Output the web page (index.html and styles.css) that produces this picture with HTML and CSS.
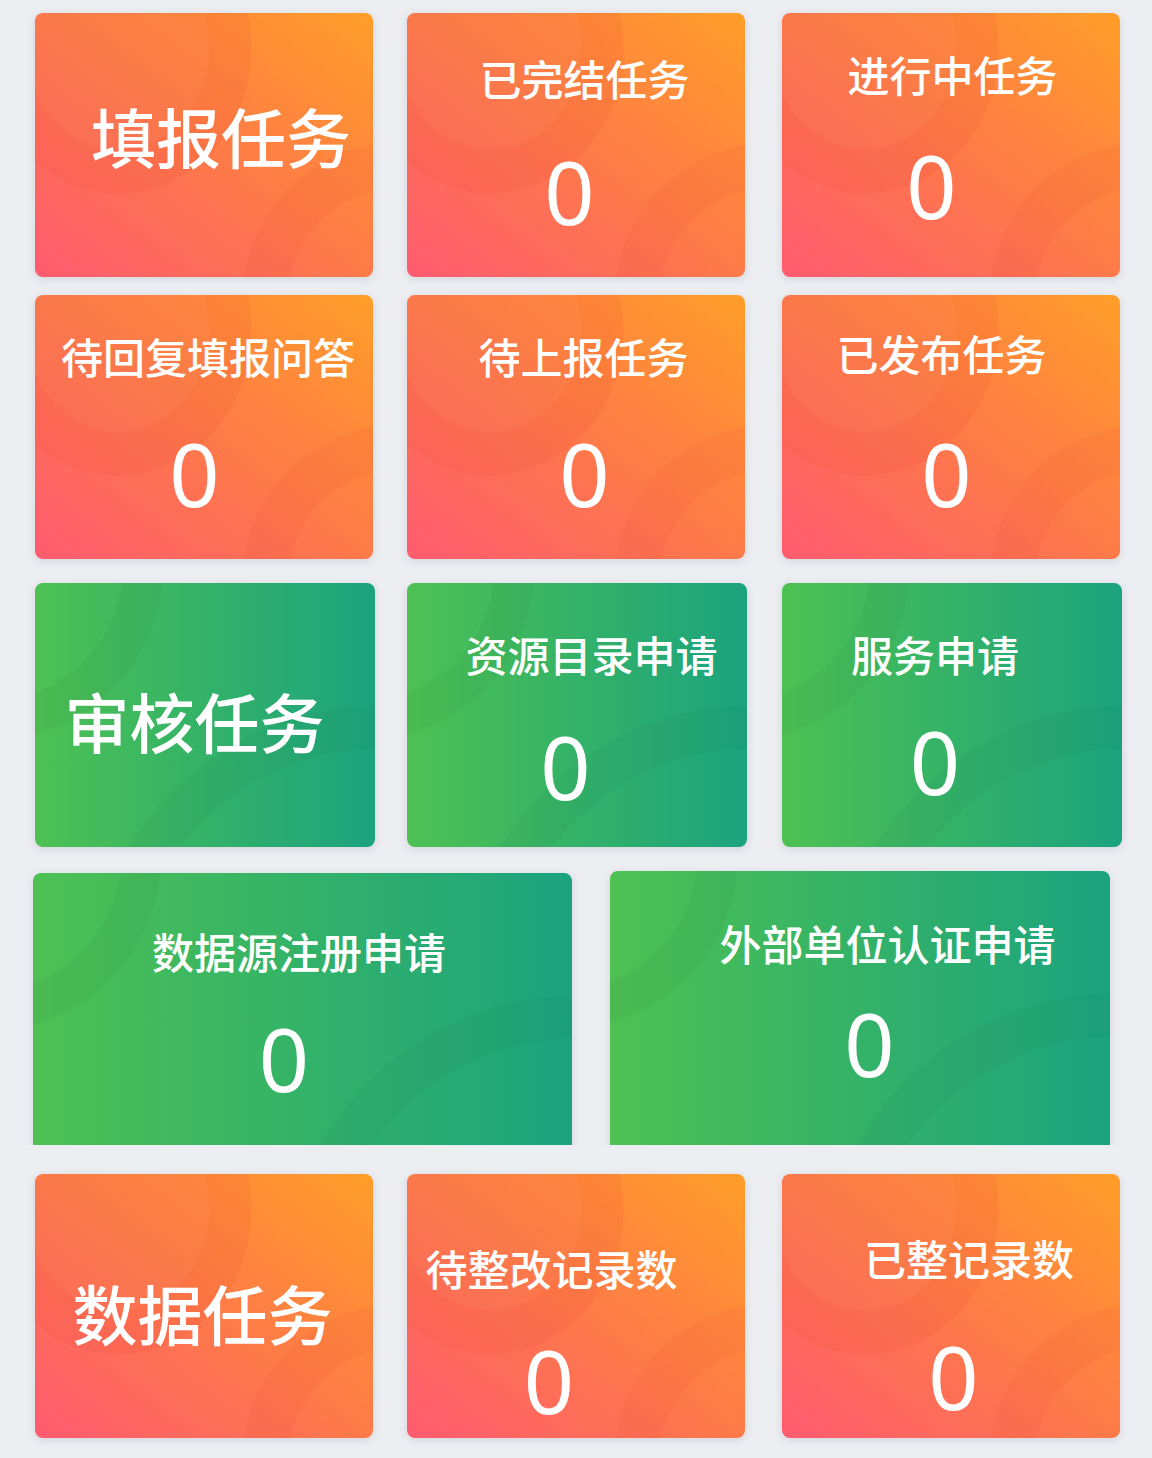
FILE: index.html
```html
<!DOCTYPE html>
<html lang="zh-CN">
<head>
<meta charset="utf-8">
<title>任务统计</title>
<link rel="stylesheet" href="styles.css">
</head>
<body>
<div class="page">
  <section class="row row-a">
    <div class="card orange big k-fill"><div class="big-title">填报任务</div></div>
    <div class="card orange k-done"><div class="title">已完结任务</div><div class="num">0</div></div>
    <div class="card orange k-doing"><div class="title">进行中任务</div><div class="num">0</div></div>
  </section>
  <section class="row row-b">
    <div class="card orange k-reply"><div class="title">待回复填报问答</div><div class="num">0</div></div>
    <div class="card orange k-toreport"><div class="title">待上报任务</div><div class="num">0</div></div>
    <div class="card orange k-published"><div class="title">已发布任务</div><div class="num">0</div></div>
  </section>
  <section class="row row-c">
    <div class="card green big k-audit"><div class="big-title">审核任务</div></div>
    <div class="card green k-catalog"><div class="title">资源目录申请</div><div class="num">0</div></div>
    <div class="card green k-service"><div class="title">服务申请</div><div class="num">0</div></div>
  </section>
  <div class="clip">
    <section class="row row-d">
      <div class="card green wide1 k-source"><div class="title">数据源注册申请</div><div class="num">0</div></div>
      <div class="card green wide2 k-external"><div class="title">外部单位认证申请</div><div class="num">0</div></div>
    </section>
  </div>
  <section class="row row-e">
    <div class="card orange big k-data"><div class="big-title">数据任务</div></div>
    <div class="card orange k-rectify"><div class="title">待整改记录数</div><div class="num">0</div></div>
    <div class="card orange k-rectified"><div class="title">已整记录数</div><div class="num">0</div></div>
  </section>
</div>
</body>
</html>
```
FILE: styles.css
```css
* { box-sizing: border-box; }
html, body { margin: 0; padding: 0; }
body {
  background: #eceef2;
  font-family: "Noto Sans CJK SC", "Noto Sans", sans-serif;
  color: #fff;
  width: 1152px;
  height: 1458px;
  overflow: hidden;
}
.page { padding-top: 13px; }

.row { display: flex; padding-left: 35px; column-gap: 34px; }
.row-a .card:nth-child(3),
.row-b .card:nth-child(3),
.row-e .card:nth-child(3) { margin-left: 3px; }
.row-b { margin-top: 18px; }
.row-c { margin-top: 24px; column-gap: 32px; }
.row-c .card { width: 340px; }
.row-c .card:nth-child(3) { margin-left: 3px; }
.clip { height: 298px; overflow: hidden; padding-top: 26px; }
.row-d { padding-left: 33px; column-gap: 38px; align-items: flex-start; }
.row-e { margin-top: 29px; }

.card {
  width: 338px;
  height: 264px;
  border-radius: 8px;
  box-shadow: 0 2px 10px rgba(40, 40, 60, 0.13);
  display: flex;
  flex-direction: column;
  align-items: center;
  flex: none;
}
.card.wide1 { width: 539px; height: 310px; }
.card.wide2 { width: 500px; height: 310px; margin-top: -2px; }

.orange {
  background:
    radial-gradient(ellipse 92px 102px at 83px 35px, rgba(255, 190, 150, 0.07) 0 99%, transparent 100%),
    radial-gradient(ellipse 134px 146px at 83px 35px, rgba(226, 56, 40, 0.11) 0 99.3%, transparent 100%),
    radial-gradient(circle at calc(100% + 27px) 287px, transparent 0 112px, rgba(226, 60, 40, 0.09) 113px 157px, transparent 158px),
    linear-gradient(to top right, #ff5b70 0%, #fe7a48 50%, #ff9e28 100%);
}
.green {
  background:
    radial-gradient(circle at -45px -15px, transparent 0 132px, rgba(40, 120, 50, 0.09) 133px 172px, transparent 173px),
    radial-gradient(circle at calc(100% + 5px) 417px, transparent 0 251px, rgba(20, 110, 70, 0.08) 252px 294px, transparent 295px),
    linear-gradient(to right, #4ec153 0%, #33b268 50%, #1ca37e 100%);
}

.title {
  font-size: 42px;
  line-height: 42px;
  font-weight: 500;
  white-space: nowrap;
  margin-top: calc(var(--tt) - 5px);
  margin-left: calc(var(--tdx) * 2);
}
.num {
  font-family: "Noto Sans", "Noto Sans CJK SC", sans-serif;
  font-size: 88px;
  line-height: 88px;
  font-weight: 400;
  margin-top: calc(var(--nt) - var(--tt) - 53px);
  margin-left: calc(var(--ndx) * 2);
}
.big-title {
  font-size: 65px;
  line-height: 65px;
  font-weight: 500;
  white-space: nowrap;
  margin-top: calc(var(--tt) - 7px);
  margin-left: calc(var(--tdx) * 2);
}

.k-fill { --tt: 97px; --tdx: 17px; }
.k-audit { --tt: 112px; --tdx: -10.5px; }
.k-data { --tt: 113px; --tdx: -1.5px; }

.k-done { --tt: 49px; --tdx: 8.5px; --nt: 150px; --ndx: -6.5px; }
.k-doing { --tt: 45px; --tdx: 1.5px; --nt: 144px; --ndx: -19.5px; }
.k-reply { --tt: 45px; --tdx: 4px; --nt: 150px; --ndx: -9.5px; }
.k-toreport { --tt: 45px; --tdx: 7.5px; --nt: 150px; --ndx: 8.5px; }
.k-published { --tt: 42px; --tdx: -9.5px; --nt: 150px; --ndx: -4.5px; }
.k-catalog { --tt: 55px; --tdx: 14.5px; --nt: 155px; --ndx: -11.5px; }
.k-service { --tt: 55px; --tdx: -17px; --nt: 150px; --ndx: -17px; }
.k-source { --tt: 62px; --tdx: -3.5px; --nt: 157px; --ndx: -18.5px; }
.k-external { --tt: 56px; --tdx: 27.5px; --nt: 144px; --ndx: 9.5px; }
.k-rectify { --tt: 78px; --tdx: -24.5px; --nt: 178px; --ndx: -27px; }
.k-rectified { --tt: 68px; --tdx: 18px; --nt: 174px; --ndx: 2.5px; }
```
